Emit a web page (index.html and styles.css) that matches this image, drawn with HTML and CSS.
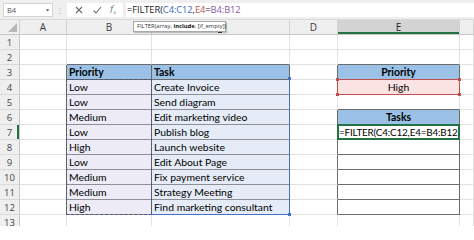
FILE: index.html
```html
<!DOCTYPE html>
<html>
<head>
<meta charset="utf-8">
<link rel="stylesheet" href="styles.css">
</head>
<body>
<div class="app">
  <div class="fbar">
    <div class="namebox"><span>B4</span><span class="dd">▾</span></div>
    <div class="sep">⋮</div>
    <div class="btns">
      <svg class="ic" width="10" height="10" viewBox="0 0 10 10"><path d="M2 2 L8 8 M8 2 L2 8" stroke="#6b6b6b" stroke-width="1.1" fill="none"/></svg>
      <svg class="ic" width="10" height="10" viewBox="0 0 10 10"><path d="M1.5 5.5 L4 8 L9 2" stroke="#6b6b6b" stroke-width="1.1" fill="none"/></svg>
      <span class="fx">f<sub>x</sub></span>
    </div>
    <div class="finput">=FILTER(<span class="rb">C4:C12</span>,<span class="rr">E4</span>=<span class="rp">B4:B12</span></div>
  </div>
  <div class="tip">FILTER(array, <b>include</b>, [if_empty])</div>
  <div class="wrap">
  <div class="sheet">
    <div class="corner"><span class="tri"></span></div>
    <div class="ch">A</div><div class="ch">B</div><div class="ch under"></div><div class="ch">D</div><div class="ch sel">E</div><div class="ch"></div>

    <div class="rh">1</div><div class="c"></div><div class="c"></div><div class="c"></div><div class="c"></div><div class="c"></div><div class="c"></div>
    <div class="rh">2</div><div class="c"></div><div class="c bbd"></div><div class="c bbd"></div><div class="c"></div><div class="c bbd"></div><div class="c"></div>
    <div class="rh">3</div><div class="c brd"></div><div class="c th">Priority</div><div class="c th">Task</div><div class="c brd"></div><div class="c th ctr">Priority</div><div class="c"></div>
    <div class="rh">4</div><div class="c brd"></div><div class="c tb">Low</div><div class="c tc">Create Invoice</div><div class="c"></div><div class="c hi ctr">High</div><div class="c"></div>
    <div class="rh">5</div><div class="c brd"></div><div class="c tb">Low</div><div class="c tc">Send diagram</div><div class="c"></div><div class="c bbd"></div><div class="c"></div>
    <div class="rh">6</div><div class="c brd"></div><div class="c tb">Medium</div><div class="c tc">Edit marketing video</div><div class="c brd"></div><div class="c th ctr">Tasks</div><div class="c"></div>
    <div class="rh act">7</div><div class="c brd"></div><div class="c tb">Low</div><div class="c tc">Publish blog</div><div class="c brd"></div><div class="c box clip">=FILTER(C4:C12,E4=B4:B12</div><div class="c"></div>
    <div class="rh">8</div><div class="c brd"></div><div class="c tb">High</div><div class="c tc">Launch website</div><div class="c brd"></div><div class="c box"></div><div class="c"></div>
    <div class="rh">9</div><div class="c brd"></div><div class="c tb">Low</div><div class="c tc">Edit About Page</div><div class="c brd"></div><div class="c box"></div><div class="c"></div>
    <div class="rh">10</div><div class="c brd"></div><div class="c tb">Medium</div><div class="c tc">Fix payment service</div><div class="c brd"></div><div class="c box"></div><div class="c"></div>
    <div class="rh">11</div><div class="c brd"></div><div class="c tb">Medium</div><div class="c tc">Strategy Meeting</div><div class="c brd"></div><div class="c box"></div><div class="c"></div>
    <div class="rh">12</div><div class="c brd"></div><div class="c tb">High</div><div class="c tc">Find marketing consultant</div><div class="c brd"></div><div class="c box"></div><div class="c"></div>
    <div class="rh">13</div><div class="c"></div><div class="c"></div><div class="c"></div><div class="c"></div><div class="c"></div><div class="c"></div>
  </div>
  <div class="overlay">
    <div class="ref-b"></div>
    <div class="ref-c"><span class="h h-tr"></span><span class="h h-br"></span></div>
    <div class="ref-e"><span class="h h-tl"></span><span class="h h-tr"></span><span class="h h-bl"></span><span class="h h-br"></span></div>
    <div class="active"></div>
  </div>
  </div>
</div>
</body>
</html>
```

FILE: styles.css
```css
html, body {
  margin: 0;
  padding: 0;
  background: #ffffff;
}
.app {
  width: 474px;
  height: 226px;
  overflow: hidden;
  position: relative;
  font-family: "Open Sans", "Noto Sans", sans-serif;
}
.fbar {
  height: 20px;
  box-sizing: border-box;
  background: #efefef;
  border-bottom: 1px solid #d9d9d9;
  display: flex;
  align-items: center;
  padding-left: 3px;
}
.namebox {
  width: 50px;
  height: 14px;
  box-sizing: border-box;
  background: #fff;
  border: 1px solid #d4d4d4;
  display: flex;
  align-items: center;
  justify-content: space-between;
  padding: 0 3px 0 3px;
  font-size: 7.5px;
  color: #555;
}
.dd {
  font-size: 6px;
  color: #777;
}
.sep {
  width: 14px;
  text-align: center;
  font-size: 8px;
  color: #b5b5b5;
}
.btns {
  width: 56px;
  height: 14px;
  background: #fff;
  display: flex;
  align-items: center;
  justify-content: space-around;
  padding: 0 3px;
  box-sizing: border-box;
}
.ic {
  display: block;
}
.fx {
  font-family: "DejaVu Serif", serif;
  font-style: italic;
  font-size: 8px;
  color: #666;
}
.fx sub {
  font-size: 5px;
}
.finput {
  flex: 1;
  height: 14px;
  margin-left: 3px;
  background: #fff;
  font-size: 9.4px;
  line-height: 14px;
  padding-left: 1px;
  color: #222;
  white-space: nowrap;
  letter-spacing: -0.1px;
}
.rb { color: #3a66c4; }
.rr { color: #c0504d; }
.rp { color: #8a5aa8; }

.tip {
  position: absolute;
  left: 133px;
  top: 21px;
  width: 93px;
  height: 11px;
  box-sizing: border-box;
  background: #fff;
  border: 1px solid #a8a8a8;
  box-shadow: 1px 1px 1px rgba(0,0,0,0.2);
  font-size: 5.8px;
  line-height: 9px;
  padding-left: 3px;
  color: #333;
  white-space: nowrap;
  z-index: 5;
}
.tip b { color: #111; }

.wrap {
  position: relative;
}
.sheet, .overlay {
  display: grid;
  grid-template-columns: 20px 47px 85px 138px 48px 122px 14px;
  grid-template-rows: repeat(14, 15px);
}
.overlay {
  position: absolute;
  left: 0;
  top: 0;
  pointer-events: none;
}
.sheet > div, .overlay > div {
  box-sizing: border-box;
}
.corner {
  background: #efefef;
  border-right: 1px solid #cfcfcf;
  border-bottom: 1px solid #c6c6c6;
  position: relative;
}
.tri {
  position: absolute;
  right: 2px;
  bottom: 2px;
  width: 0;
  height: 0;
  border-left: 9px solid transparent;
  border-bottom: 9px solid #b7b7b7;
}
.ch {
  background: #efefef;
  border-right: 1px solid #d2d2d2;
  border-bottom: 1px solid #c6c6c6;
  text-align: center;
  font-size: 10px;
  line-height: 15px;
  color: #3a3a3a;
}
.ch.under {
  position: relative;
}
.ch.under::after {
  content: "";
  position: absolute;
  left: 66px;
  top: 11px;
  width: 4px;
  height: 2px;
  background: #3a3a3a;
}
.ch.sel {
  background: #d3d3d3;
  box-shadow: inset 0 -2px 0 #217346;
  color: #222;
}
.rh {
  background: #efefef;
  border-right: 1px solid #c6c6c6;
  border-bottom: 1px solid #dadada;
  text-align: center;
  font-size: 9.5px;
  line-height: 15px;
  color: #444;
}
.rh.act {
  box-shadow: inset -2px 0 0 #217346;
}
.c {
  border-right: 1px solid #e1e1e1;
  border-bottom: 1px solid #e1e1e1;
  font-family: "Lato", "Carlito", sans-serif;
  font-size: 10.4px;
  line-height: 15px;
  padding: 0 2px;
  white-space: nowrap;
  overflow: hidden;
  color: #000;
}
.bbd { border-bottom-color: #6b6b6b; }
.brd { border-right-color: #6b6b6b; }
.th {
  background: #9bc2e6;
  font-weight: bold;
  border-right-color: #6b6b6b;
  border-bottom-color: #6b6b6b;
}
.tb {
  background: #ecebf6;
  border-bottom-color: #8e8e96;
  border-right-color: #6b6b6b;
}
.tc {
  background: #e5ecf7;
  border-bottom-color: #8e8e96;
  border-right-color: #6b6b6b;
}
.hi {
  background: #fbe3e3;
}
.ctr { text-align: center; }
.box {
  border-right-color: #6b6b6b;
  border-bottom-color: #6b6b6b;
}
.clip {
  padding-left: 1px;
  font-size: 9.8px;
  letter-spacing: -0.15px;
}

.ref-b {
  grid-column: 3;
  grid-row: 5 / 14;
  margin: -1px 0 0 -1px;
  border: 1px dashed #4d5a70;
}
.ref-c {
  grid-column: 4;
  grid-row: 5 / 14;
  margin: -1px 0 0 -1px;
  border-right: 1px solid #4472c4;
  border-bottom: 1px solid #4472c4;
  position: relative;
}
.ref-c .h { background: #4472c4; }
.ref-e {
  grid-column: 6;
  grid-row: 5;
  margin: -1px 0 0 -1px;
  border: 1px solid #c0504d;
  position: relative;
}
.ref-e .h { background: #c0504d; }
.h {
  position: absolute;
  width: 3px;
  height: 3px;
}
.h-tl { left: -2px; top: -2px; }
.h-tr { right: -2px; top: -2px; }
.h-bl { left: -2px; bottom: -2px; }
.h-br { right: -2px; bottom: -2px; }
.active {
  grid-column: 6;
  grid-row: 8;
  margin: -1px 0 0 -1px;
  border: 2px solid #217346;
}
```
